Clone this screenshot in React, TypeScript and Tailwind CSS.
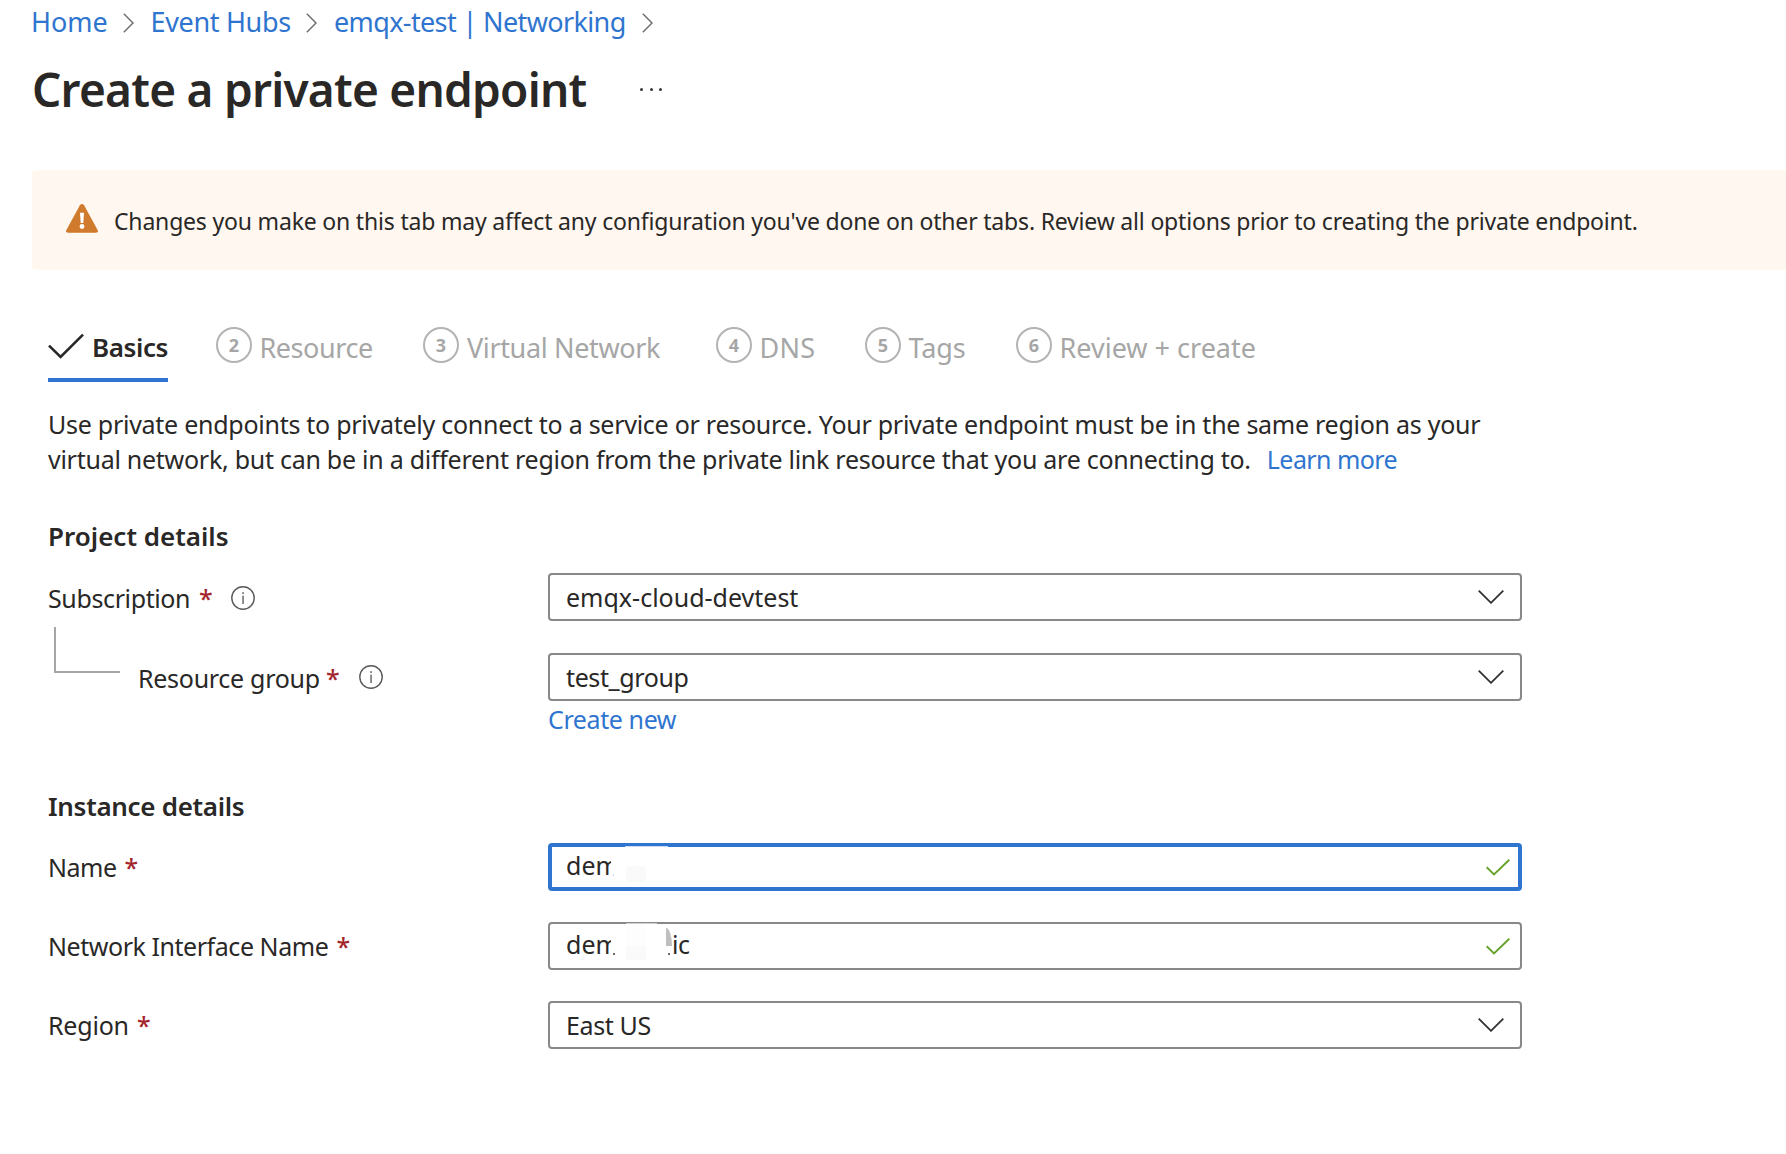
import React from "react";

function Separator() {
  return (
    <svg className="mt-0.5 h-5 w-[11px] shrink-0" viewBox="0 0 11 20" fill="none" stroke="#6b6b6b" strokeWidth="1.4">
      <path d="M0.8 0.7 L10 10 L0.8 19.3" />
    </svg>
  );
}

function ChevronDown() {
  return (
    <svg className="mr-4 h-[14px] w-[26px] shrink-0" viewBox="0 0 26 14" fill="none" stroke="#323130" strokeWidth="1.8">
      <path d="M0.7 0.7 L13 12.8 L25.3 0.7" />
    </svg>
  );
}

function ValidCheck() {
  return (
    <svg className="h-[17px] w-6 shrink-0" viewBox="0 0 24 17" fill="none" stroke="#64a22a" strokeWidth="1.9">
      <path d="M0.7 8.2 L8 15.4 L23.3 0.8" />
    </svg>
  );
}

function InfoIcon() {
  return (
    <svg className="h-6 w-6 shrink-0" viewBox="0 0 24 24" fill="none">
      <circle cx="12" cy="12" r="11.2" stroke="#5b5a58" strokeWidth="1.4" />
      <rect x="11.3" y="9.6" width="1.5" height="8.4" fill="#6b6a68" />
      <rect x="11.2" y="6.2" width="1.7" height="1.7" fill="#6b6a68" />
    </svg>
  );
}

function Star() {
  return <span className="font-medium text-[#a4262c]">*</span>;
}

function Step({ n, label, box, text }: { n: number; label: string; box: string; text: string }) {
  return (
    <div className={`flex h-[58px] shrink-0 items-start text-[#a6a6a6] ${box}`}>
      <span className="mt-[7px] flex h-9 w-9 shrink-0 items-center justify-center rounded-full border-2 border-[#b3b3b3] text-[18px] font-bold leading-none">
        {n}
      </span>
      <span className={`whitespace-nowrap text-[27px] leading-[55px] ${text}`}>{label}</span>
    </div>
  );
}

const field = "relative flex h-12 w-[974px] shrink-0 items-center justify-between rounded-[4px] bg-white";
const plain = "border-2 border-[#8a8886] pl-4";

export default function App() {
  return (
    <main className="h-[1154px] w-[1786px] overflow-hidden bg-white font-['Noto_Sans','Open_Sans',sans-serif] text-[25px] text-[#292827]">
      <nav className="flex h-[43px] items-center whitespace-nowrap pl-[31px] text-[27px] leading-[43px] text-[#2f75d0]">
        <a className="w-[92px]">Home</a>
        <Separator />
        <a className="ml-[16.5px] w-[155.5px] tracking-[-0.33px]">Event Hubs</a>
        <Separator />
        <a className="ml-[17px] w-[308px] tracking-[-0.63px]">emqx-test | Networking</a>
        <Separator />
      </nav>

      <header className="flex h-[90px] items-center pl-8">
        <h1 className="w-[608px] whitespace-nowrap pt-px text-[46px] font-semibold leading-[90px] tracking-[-0.75px]">
          Create a private endpoint
        </h1>
        <div className="flex gap-[6.5px] pt-[3px]">
          <i className="h-[3px] w-[3px] rounded-full bg-[#3b3a39]" />
          <i className="h-[3px] w-[3px] rounded-full bg-[#3b3a39]" />
          <i className="h-[3px] w-[3px] rounded-full bg-[#3b3a39]" />
        </div>
      </header>

      <section className="ml-8 mt-[37px] flex h-[100px] items-start rounded-l-[4px] bg-[#fff7f0] pl-[34px]">
        <svg className="mt-[34px] h-[29px] w-8 shrink-0" viewBox="0 0 32 29">
          <path d="M13.9 1.3 Q16 -1.2 18.1 1.3 L31.6 26 Q32.6 28.7 30 28.8 H2 Q-0.6 28.7 0.4 26 Z" fill="#cf7a2d" />
          <path d="M14 8.8 H18 L17.3 19 H14.7 Z" fill="#fff" />
          <circle cx="16" cy="22.5" r="2.4" fill="#fff" />
        </svg>
        <p className="ml-4 mt-[33px] whitespace-nowrap text-[23px] leading-9 tracking-[-0.185px]">
          Changes you make on this tab may affect any configuration you've done on other tabs. Review all options prior to creating the private endpoint.
        </p>
      </section>

      <div className="mt-[50px] flex pl-12">
        <div className="w-[168px]">
          <div className="flex h-[62px] w-[120px] items-start border-b-4 border-[#2f75d0]">
            <svg className="mt-[13px] h-[26px] w-9 shrink-0" viewBox="0 0 36 26" fill="none" stroke="#292827" strokeWidth="2.6">
              <path d="M1 12.6 L12.6 24 L35 1.6" />
            </svg>
            <span className="ml-2 whitespace-nowrap text-[26px] font-semibold leading-[55px] tracking-[-0.4px]">Basics</span>
          </div>
        </div>
        <Step n={2} label="Resource" box="w-[207px]" text="ml-[7.5px] tracking-[-0.45px]" />
        <Step n={3} label="Virtual Network" box="w-[293px]" text="ml-[8px] tracking-[-0.36px]" />
        <Step n={4} label="DNS" box="w-[149px]" text="ml-[7.5px] tracking-[0.3px]" />
        <Step n={5} label="Tags" box="w-[151px]" text="ml-[7.5px] tracking-[-0.1px]" />
        <Step n={6} label="Review + create" box="w-[260px]" text="ml-[7.5px]" />
      </div>

      <div className="pl-12">
        <p className="mt-[25px] whitespace-nowrap leading-[35px] tracking-[-0.265px]">
          Use private endpoints to privately connect to a service or resource. Your private endpoint must be in the same region as your
          <br />
          virtual network, but can be in a different region from the private link resource that you are connecting to.
          <a className="ml-4 tracking-[-0.56px] text-[#2f75d0]">Learn more</a>
        </p>

        <h2 className="mt-[29px] text-[26px] font-semibold leading-[60px]">Project details</h2>
        <div className="mt-[7px] flex h-12">
          <div className="flex w-[500px] items-center">
            <span className="w-[151px] pt-[3px] tracking-[-0.38px]">Subscription</span>
            <div className="w-8 pt-[3px]"><Star /></div>
            <div className="pt-0.5"><InfoIcon /></div>
          </div>
          <div className={`${field} ${plain}`}>
            <span className="pt-0.5">emqx-cloud-devtest</span>
            <ChevronDown />
          </div>
        </div>

        <div className="mt-8 flex h-12">
          <div className="flex w-[500px] items-center">
            <div className="-mt-[26px] ml-1.5 h-[46px] w-[66px] shrink-0 self-start border-b-2 border-l-2 border-[#a6a6a6]" />
            <span className="ml-[18px] w-[188px] whitespace-nowrap pt-[3px] tracking-[-0.28px]">Resource group</span>
            <div className="w-[33px] pt-[3px]"><Star /></div>
            <InfoIcon />
          </div>
          <div className={`${field} ${plain}`}>
            <span className="pt-0.5 tracking-[-0.38px]">test_group</span>
            <ChevronDown />
          </div>
        </div>
        <a className="ml-[500px] mt-0.5 block leading-8 tracking-[-0.4px] text-[#2f75d0]">Create new</a>

        <h2 className="mt-[41px] text-[26px] font-semibold leading-[60px] tracking-[-0.3px]">Instance details</h2>
        <div className="mt-[7px] flex h-12">
          <div className="flex w-[500px] items-center pt-0.5">
            <span className="w-[76.5px] tracking-[-0.5px]">Name</span>
            <Star />
          </div>
          <div className={`${field} border-4 border-[#2f75d0] pl-[14px]`}>
            <span className="pb-[3px]">dem</span>
            <i className="absolute left-[59px] top-2 h-6 w-3 bg-white" />
            <i className="absolute left-[61px] top-[27px] h-0.5 w-px bg-gray-300" />
            <i className="absolute left-[74px] top-[19px] h-4 w-5 bg-[#fafafa]" />
            <i className="absolute left-[73px] top-[-1px] h-px w-[43px] bg-[#c9dcf3]" />
            <div className="mr-2"><ValidCheck /></div>
          </div>
        </div>

        <div className="mt-[31px] flex h-12">
          <div className="flex w-[500px] items-center pt-0.5">
            <span className="w-[288.5px] whitespace-nowrap tracking-[-0.45px]">Network Interface Name</span>
            <Star />
          </div>
          <div className={`${field} ${plain}`}>
            <div className="flex pb-[3px]">
              <span className="w-[46px]">dem</span>
              <span className="ml-[60px] tracking-[-0.5px]">ic</span>
            </div>
            <i className="absolute left-[61px] top-2 h-7 w-3 bg-white" />
            <i className="absolute left-[63px] top-[29px] h-0.5 w-0.5 bg-[#6b6a68]" />
            <i className="absolute left-[118px] top-[29px] h-0.5 w-0.5 bg-[#6b6a68]" />
            <i className="absolute left-[76px] top-0 h-6 w-5 bg-[#fdfdfd]" />
            <i className="absolute left-[76px] top-[22px] h-[14px] w-5 bg-[#fafafa]" />
            <i className="absolute left-[76px] top-[-1px] h-px w-[31px] bg-[#d2d1d0]" />
            <i className="absolute left-[116px] top-1 h-[18px] w-1.5 rounded-tr-[100%] bg-[#bfbfbf]" />
            <div className="mr-2.5"><ValidCheck /></div>
          </div>
        </div>

        <div className="mt-[31px] flex h-12">
          <div className="flex w-[500px] items-center pt-0.5">
            <span className="w-[89px] tracking-[-0.2px]">Region</span>
            <Star />
          </div>
          <div className={`${field} ${plain}`}>
            <span className="pt-0.5 tracking-[-0.37px]">East US</span>
            <ChevronDown />
          </div>
        </div>
      </div>
    </main>
  );
}
